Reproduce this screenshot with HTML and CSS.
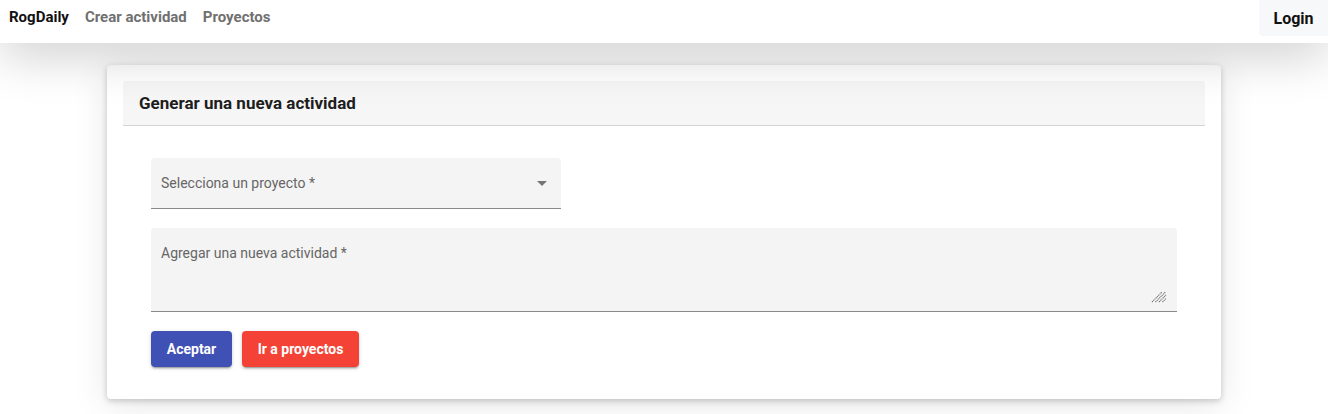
FILE: index.html
```html
<!DOCTYPE html>
<html lang="es">
<head>
<meta charset="utf-8">
<title>RogDaily</title>
<link rel="stylesheet" href="styles.css">
</head>
<body>
<nav class="navbar">
  <div class="nav-left">
    <a class="brand" href="#">RogDaily</a>
    <a class="nav-link" href="#">Crear actividad</a>
    <a class="nav-link" href="#">Proyectos</a>
  </div>
  <button class="login">Login</button>
</nav>
<main class="container">
  <section class="card">
    <header class="card-header">Generar una nueva actividad</header>
    <div class="card-body">
      <div class="field select-field">
        <span class="label">Selecciona un proyecto *</span>
        <span class="arrow"></span>
      </div>
      <div class="field textarea-field">
        <span class="label">Agregar una nueva actividad *</span>
        <svg class="grip" width="16" height="16" viewBox="0 0 16 16">
          <path d="M1 15 L11 5 M4.5 15 L14.5 5 M8 15 L15 8 M11.5 15 L15 11.5" stroke="#707070" stroke-width="1.1" stroke-dasharray="1.2 0.6" fill="none"/>
        </svg>
      </div>
      <div class="actions">
        <button class="btn btn-primary">Aceptar</button>
        <button class="btn btn-warn">Ir a proyectos</button>
      </div>
    </div>
  </section>
</main>
</body>
</html>
```

FILE: styles.css
```css
* { box-sizing: border-box; }
html, body { margin: 0; padding: 0; }
body {
  background: #ffffff;
  font-family: Roboto, "Liberation Sans", sans-serif;
  color: #212529;
  height: 414px;
  overflow: hidden;
}
.navbar {
  position: relative;
  z-index: 2;
  height: 43px;
  background: #ffffff;
  display: flex;
  justify-content: space-between;
  align-items: flex-start;
  box-shadow: 0 10px 50px rgba(0,0,0,0.22);
}
.nav-left {
  display: flex;
  align-items: center;
  height: 34px;
  padding-left: 9px;
  gap: 16px;
}
.nav-left a {
  text-decoration: none;
  font-weight: 700;
  font-size: 15px;
}
.brand { color: #111; }
.nav-link { color: #707070; }
.login {
  width: 69px;
  height: 36px;
  border: none;
  border-radius: 0 0 0 4px;
  background: #f7f8f9;
  font-family: Roboto, "Liberation Sans", sans-serif;
  font-weight: 700;
  font-size: 16px;
  color: #111;
  padding: 0;
}
.container {
  width: 1114px;
  margin: 22px auto 0;
}
.card {
  background: #fff;
  border-radius: 4px;
  padding: 16px 16px 32px;
  box-shadow: 0 2px 6px rgba(0,0,0,0.2), 0 6px 36px rgba(0,0,0,0.1);
}
.card-header {
  height: 45px;
  background: #f6f6f6;
  border-bottom: 1px solid #d6d6d6;
  border-radius: 3px 3px 0 0;
  padding-left: 16px;
  display: flex;
  align-items: center;
  font-weight: 700;
  font-size: 17px;
  color: #1e1e1e;
}
.card-body {
  padding: 32px 28px 0;
  display: flex;
  flex-direction: column;
}
.field {
  position: relative;
  background: #f4f4f4;
  border-radius: 4px 4px 0 0;
  border-bottom: 1px solid #8a8a8a;
  font-size: 14px;
  color: #666;
}
.select-field {
  width: 410px;
  height: 51px;
  display: flex;
  align-items: center;
  justify-content: space-between;
  padding: 0 14px 0 10px;
}
.arrow {
  width: 0; height: 0;
  border-left: 5px solid transparent;
  border-right: 5px solid transparent;
  border-top: 5px solid #757575;
}
.textarea-field {
  margin-top: 19px;
  height: 84px;
  padding: 17px 10px 0;
}
.grip {
  position: absolute;
  right: 10px;
  bottom: 8px;
}
.actions {
  margin-top: 19px;
  display: flex;
  gap: 10px;
}
.btn {
  height: 36px;
  border: none;
  border-radius: 4px;
  color: #fff;
  font-family: Roboto, "Liberation Sans", sans-serif;
  font-weight: 700;
  font-size: 14px;
  padding: 0;
  white-space: nowrap;
  box-shadow: 0 3px 1px -2px rgba(0,0,0,.2), 0 2px 2px 0 rgba(0,0,0,.14), 0 1px 5px 0 rgba(0,0,0,.12);
}
.btn-primary { background: #3f51b5; width: 81px; }
.btn-warn { background: #f44336; width: 117px; }
```
